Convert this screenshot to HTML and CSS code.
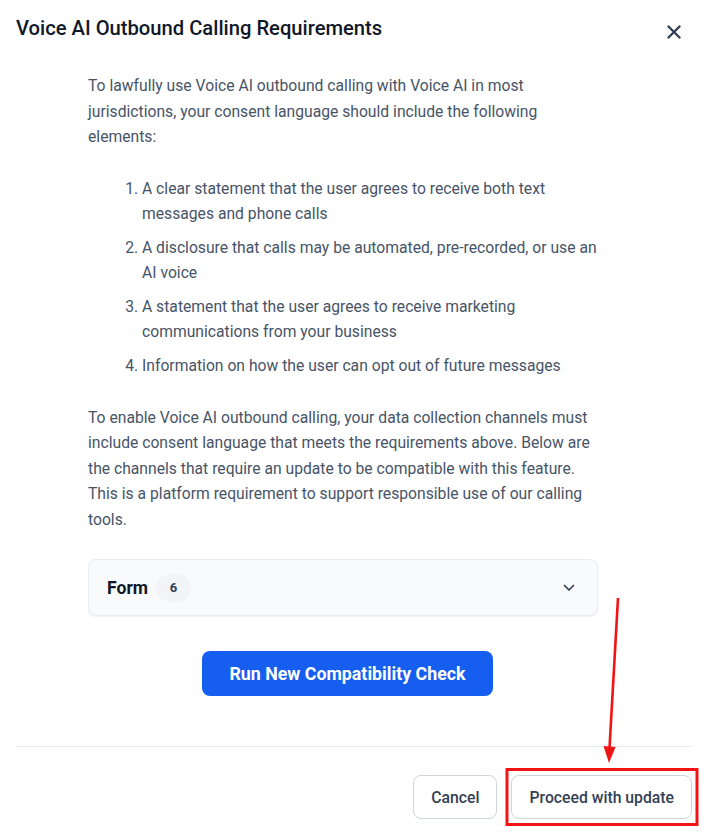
FILE: index.html
```html
<!DOCTYPE html>
<html lang="en">
<head>
    <meta charset="UTF-8">
    <title>Voice AI Outbound Calling Requirements</title>
    <link rel="stylesheet" href="styles.css">
</head>
<body>

<div class="modal">
    <div class="modal-header">
        <h1 class="modal-title">Voice AI Outbound Calling Requirements</h1>
        <button type="button" class="close-btn" title="Close">
            <svg width="14" height="14" viewBox="0 0 14 14"><path d="M1.5 1.5 L12.5 12.5 M12.5 1.5 L1.5 12.5" stroke="#344054" stroke-width="2.4" stroke-linecap="round"/></svg>
        </button>
    </div>

    <div class="modal-body">
        <p class="intro">To lawfully use Voice AI outbound calling with Voice AI in most jurisdictions, your consent language should include the following elements:</p>
        <ol class="req-list">
            <li>A clear statement that the user agrees to receive both text messages and phone calls</li>
            <li>A disclosure that calls may be automated, pre-recorded, or use an AI voice</li>
            <li>A statement that the user agrees to receive marketing communications from your business</li>
            <li>Information on how the user can opt out of future messages</li>
        </ol>
        <p class="intro">To enable Voice AI outbound calling, your data collection channels must include consent language that meets the requirements above. Below are the channels that require an update to be compatible with this feature. This is a platform requirement to support responsible use of our calling tools.</p>

        <div class="accordion">
            <div class="acc-label">
                <span class="acc-name">Form</span>
                <span class="badge">6</span>
            </div>
            <svg width="12" height="8" viewBox="0 0 12 8"><path d="M1.5 1.5 L6 6 L10.5 1.5" fill="none" stroke="#344054" stroke-width="1.7" stroke-linecap="round" stroke-linejoin="round"/></svg>
        </div>

        <div class="check-row">
            <button type="button" class="check-btn">Run New Compatibility Check</button>
        </div>
    </div>

    <div class="modal-footer">
        <button type="button" class="btn">Cancel</button>
        <button type="button" class="btn">Proceed with update</button>
    </div>
</div>

<!-- annotation drawn over the screenshot -->
<svg class="annotation" width="712" height="833" viewBox="0 0 712 833">
    <line x1="618" y1="598" x2="609.5" y2="748" stroke="#f01414" stroke-width="2.6"/>
    <path d="M603.5 746 L615.5 747 L609 763 Z" fill="#f01414"/>
    <rect x="507" y="769.5" width="190" height="55" fill="none" stroke="#f01414" stroke-width="3"/>
</svg>

</body>
</html>
```

FILE: styles.css
```css
* { box-sizing: border-box; margin: 0; padding: 0 }
body {
    font-family: Roboto, "Noto Sans", sans-serif;
    background: #fff;
    color: #475467;
    width: 712px;
    height: 833px;
    overflow: hidden;
    position: relative;
}

.modal-header {
    display: flex;
    justify-content: space-between;
    align-items: flex-start;
    padding: 16px 26px 0 16px;
    height: 57px;
}
.modal-title {
    font-size: 20.2px;
    font-weight: 500;
    color: #101828;
    line-height: 24px;
}
.close-btn {
    background: transparent;
    border: none;
    width: 24px;
    height: 24px;
    margin-top: 4px;
    display: flex;
    align-items: center;
    justify-content: center;
    cursor: pointer;
}

.modal-body {
    padding: 16px 114px 0 88px;
    font-size: 15.7px;
}
.intro {
    line-height: 25.5px;
}
.req-list {
    padding-left: 54px;
    margin: 26px 0 27px;
    line-height: 25px;
}
.req-list li { margin-bottom: 9px }
.req-list li:last-child { margin-bottom: 0 }

.accordion {
    margin-top: 27px;
    height: 57px;
    display: flex;
    align-items: center;
    justify-content: space-between;
    padding: 0 22px 0 18px;
    background: #f9fafb;
    border: 1px solid #eaecf0;
    border-radius: 8px;
    box-shadow: 0 1px 2px rgba(16,24,40,0.06);
}
.acc-label {
    display: flex;
    align-items: center;
    gap: 8px;
}
.acc-name {
    font-size: 17.6px;
    font-weight: 700;
    color: #101828;
}
.badge {
    display: inline-flex;
    align-items: center;
    justify-content: center;
    width: 35px;
    height: 28px;
    border-radius: 14px;
    background: #f2f4f7;
    font-size: 13px;
    font-weight: 700;
    color: #344054;
}

.check-row {
    display: flex;
    justify-content: center;
    padding-left: 9px;
    margin-top: 35px;
}
.check-btn {
    font-family: inherit;
    background: #155eef;
    color: #fff;
    border: none;
    border-radius: 8px;
    height: 45px;
    width: 291px;
    font-size: 17.8px;
    font-weight: 700;
    cursor: pointer;
}

.modal-footer {
    margin: 50px 20px 0 16px;
    border-top: 1px solid #eaecf0;
    padding-top: 28px;
    display: flex;
    justify-content: flex-end;
    gap: 14px;
}
.btn {
    font-family: inherit;
    height: 44px;
    padding: 0 17px;
    background: #fff;
    border: 1px solid #d0d5dd;
    border-radius: 8px;
    font-size: 15.75px;
    font-weight: 500;
    color: #344054;
    cursor: pointer;
}

.annotation {
    position: absolute;
    left: 0;
    top: 0;
    pointer-events: none;
}
```
